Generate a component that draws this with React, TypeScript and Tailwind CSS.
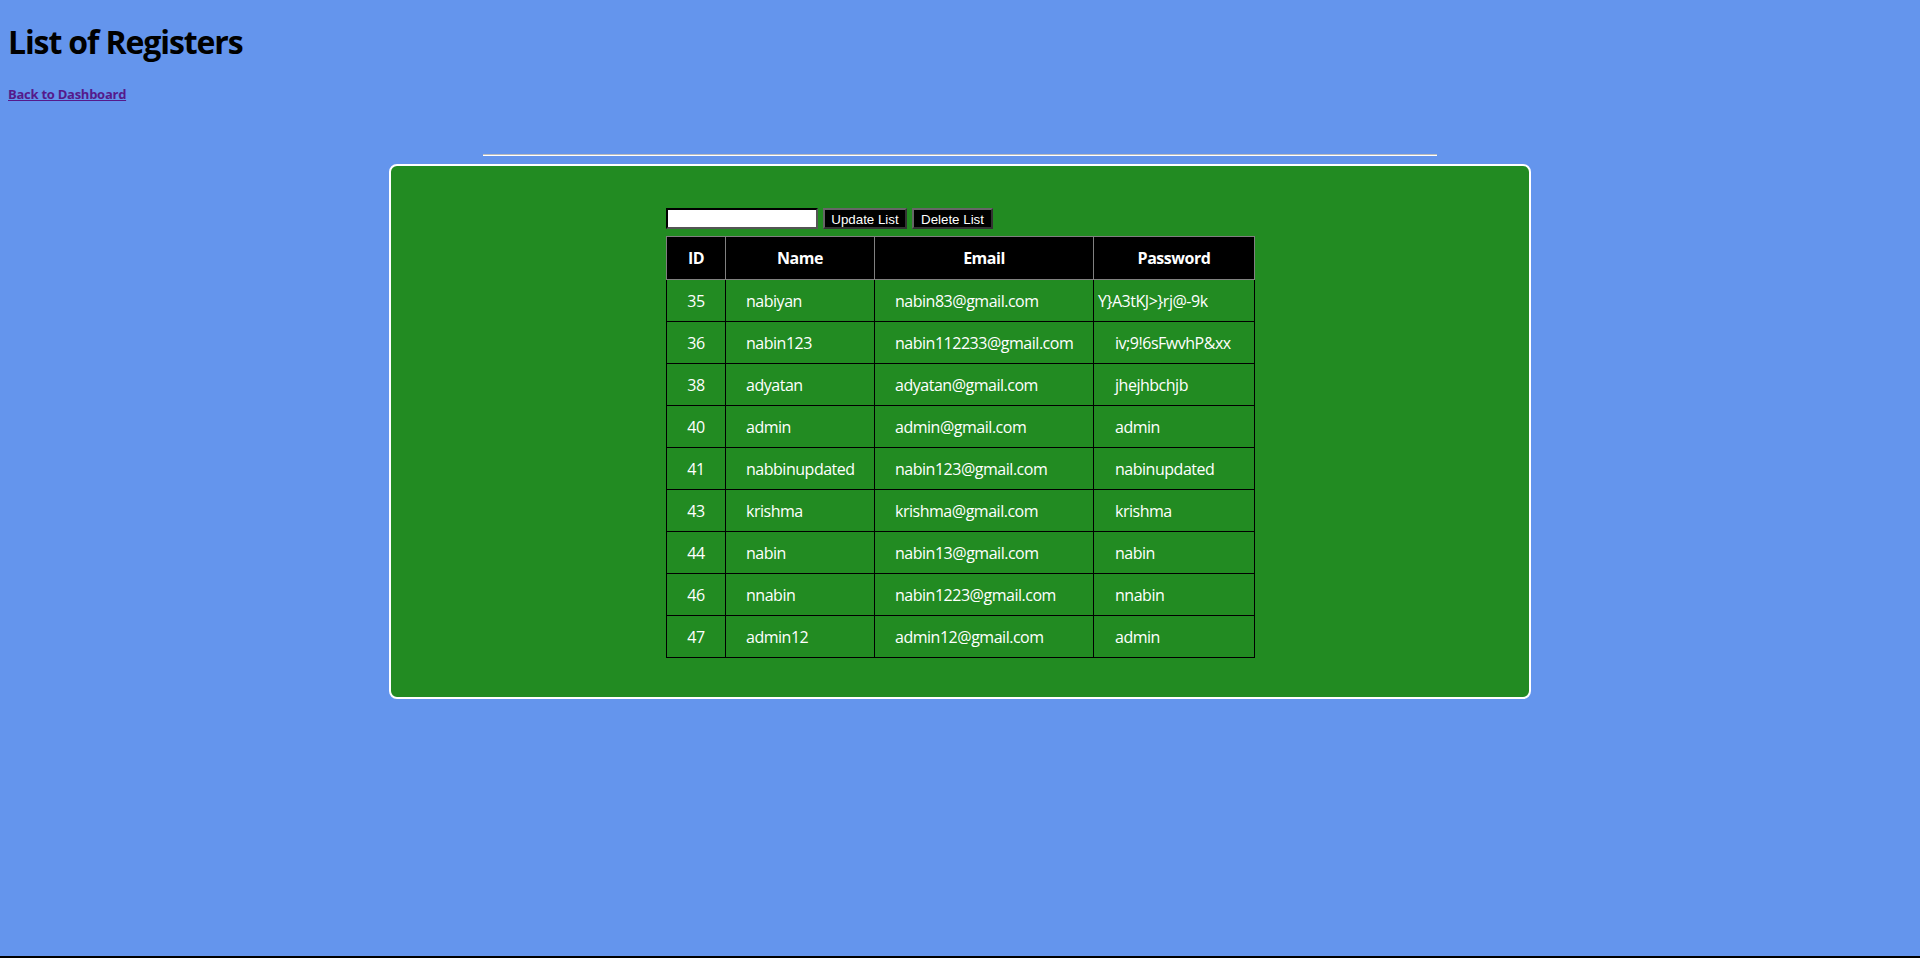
const rows = [
  { id: 35, name: "nabiyan", email: "nabin83@gmail.com", password: "Y}A3tKJ>}rj@-9k" },
  { id: 36, name: "nabin123", email: "nabin112233@gmail.com", password: "iv;9!6sFwvhP&xx" },
  { id: 38, name: "adyatan", email: "adyatan@gmail.com", password: "jhejhbchjb" },
  { id: 40, name: "admin", email: "admin@gmail.com", password: "admin" },
  { id: 41, name: "nabbinupdated", email: "nabin123@gmail.com", password: "nabinupdated" },
  { id: 43, name: "krishma", email: "krishma@gmail.com", password: "krishma" },
  { id: 44, name: "nabin", email: "nabin13@gmail.com", password: "nabin" },
  { id: 46, name: "nnabin", email: "nabin1223@gmail.com", password: "nnabin" },
  { id: 47, name: "admin12", email: "admin12@gmail.com", password: "admin" },
];

export default function App() {
  return (
    <div
      className="flex h-[958px] flex-col bg-[#6495ED] text-black"
      style={{ fontFamily: '"Open Sans", "Noto Sans", sans-serif' }}
    >
      <div className="flex-1 px-2">
        {/* Header */}
        <h1 className="mt-[21px] text-[32px] font-bold leading-[42px] tracking-[-0.035em]">
          List of Registers
        </h1>
        <div className="mt-[22px] text-[13px] font-bold leading-[18px] tracking-[-0.02em]">
          <a href="#" className="text-[#551A8B] underline">
            Back to Dashboard
          </a>
        </div>

        <div className="mx-auto mt-[51px] w-[954px] border-t border-b border-t-[#bcbcbc] border-b-white" />

        {/* Panel */}
        <div className="mx-auto mt-[8px] h-[535px] w-[1142px] rounded-lg border-2 border-white bg-[#228B22]">
          <div className="pl-[275px] pt-[42px]">
            <div className="flex items-center gap-[5px]">
              <input
                type="text"
                className="h-[21px] w-[152px] border-2 border-t-black border-l-black border-r-[#555] border-b-[#555] bg-white outline-none"
              />
              <button
                type="button"
                className="h-[21px] w-[84px] border-2 border-t-[#666] border-l-[#666] border-r-[#333] border-b-[#333] bg-black text-[13.33px] text-white"
                style={{ fontFamily: '"Liberation Sans", Arial, sans-serif' }}
              >
                Update List
              </button>
              <button
                type="button"
                className="h-[21px] w-[81px] border-2 border-t-[#666] border-l-[#666] border-r-[#333] border-b-[#333] bg-black text-[13.33px] text-white"
                style={{ fontFamily: '"Liberation Sans", Arial, sans-serif' }}
              >
                Delete List
              </button>
            </div>

            <table className="mt-[7px] w-[588px] table-fixed border-collapse text-[16px] tracking-[-0.03em] text-white">
              <colgroup>
                <col className="w-[59px]" />
                <col className="w-[149px]" />
                <col className="w-[219px]" />
                <col className="w-[161px]" />
              </colgroup>
              <thead>
                <tr className="h-[43px] bg-black">
                  <th className="border border-[#808080] font-bold">ID</th>
                  <th className="border border-[#808080] font-bold">Name</th>
                  <th className="border border-[#808080] font-bold">Email</th>
                  <th className="border border-[#808080] font-bold">Password</th>
                </tr>
              </thead>
              <tbody>
                {rows.map((r, i) => (
                  <tr key={r.id} className="h-[42px]">
                    <td className="border border-black text-center">{r.id}</td>
                    <td className="border border-black pl-[20px]">{r.name}</td>
                    <td className="border border-black pl-[20px]">{r.email}</td>
                    <td
                      className={`whitespace-nowrap border border-black ${
                        i === 0 ? "pl-[4px]" : "pl-[21px]"
                      }`}
                    >
                      {r.password}
                    </td>
                  </tr>
                ))}
              </tbody>
            </table>
          </div>
        </div>
      </div>
      <div className="h-[2px] bg-black" />
    </div>
  );
}
